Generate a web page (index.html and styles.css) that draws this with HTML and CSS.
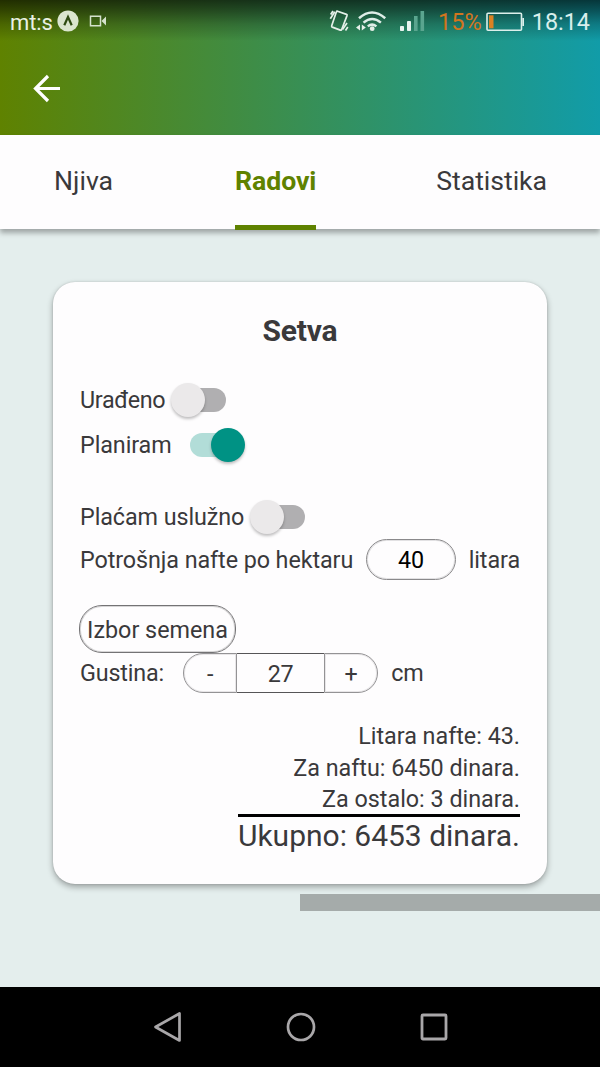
FILE: index.html
```html
<!DOCTYPE html>
<html lang="sr-Latn">
<head>
<meta charset="utf-8">
<title>Radovi</title>
<link rel="stylesheet" href="styles.css">
</head>
<body>
<div class="app">
  <header class="header">
    <div class="status">
      <span class="carrier">mt:s</span>
      <svg class="status-left" width="44" height="24" viewBox="0 0 44 24">
        <circle cx="11" cy="12" r="10.6" fill="#dbe5cf"/>
        <path d="M7.3 16.3 11 8l3.700 8.300" fill="none" stroke="#2f4b12" stroke-width="2.200"/>
        <path d="M33.500 7.200h10v9.600h-10z" fill="none" stroke="#d5e2cd" stroke-width="1.500"/>
        <path d="M44.500 12 49 7.500v9z" fill="#d5e2cd"/>
      </svg>
      <svg class="status-icons" width="100" height="30" viewBox="328 7 100 30">
        <g fill="none" stroke="#e5f0e9" stroke-width="1.700">
          <path d="m338.500 11.200 9 3.200q.8.300.5 1.200l-5.300 13.900q-.4 1-1.400.6l-8-3q-.9-.400-.600-1.300l4.600-13.800q.3-1 1.200-.8z"/>
          <path d="m331.700 14.500 2.300-3.500M331.300 18.800l4.500-7M343.500 29.500l4.500-6.500M346.500 30.500l2.300-3.500"/>
        </g>
        <g fill="none" stroke="#dfeee8" stroke-width="2.500">
          <path d="M360 18.200q13-11.500 26.200 0M364.500 22.600q8.700-7.200 17.400 0M368.800 26.400q4.300-3.500 8.600 0"/>
        </g>
        <circle cx="373.200" cy="28.700" r="2.400" fill="#e5f0e9"/>
        <path d="m361 24.500v6l-4-3zM362.800 24.500v6l4-3z" fill="#e5f0e9"/>
        <rect x="401" y="26" width="4" height="5" rx=".8" fill="#e7f3ef"/>
        <rect x="408" y="21" width="4" height="10" rx=".8" fill="#e7f3ef"/>
        <rect x="415" y="16" width="3.600" height="15" fill="#5aa58f"/>
        <rect x="421.500" y="11" width="3.600" height="20" fill="#5aa58f"/>
      </svg>
      <span class="percent">15%</span>
      <svg class="battery" width="39" height="20" viewBox="0 0 39 20">
        <rect x="1" y="1.300" width="34.500" height="17" rx="1" fill="none" stroke="#dcefeb" stroke-width="1.600"/>
        <path d="M36.300 6h1.700v8h-1.700z" fill="#dcefeb"/>
        <rect x="3" y="3.300" width="4.500" height="13" fill="#db8122"/>
      </svg>
      <span class="clock">18:14</span>
    </div>
    <svg class="back" width="30" height="30" viewBox="0 0 30 30">
      <path d="M28 15.500H4M16 3 3.500 15.500 16 28" fill="none" stroke="#fff" stroke-width="3.200"/>
    </svg>
  </header>

  <nav class="tabs">
    <a class="tab">Njiva</a>
    <a class="tab tab-active">Radovi</a>
    <a class="tab">Statistika</a>
  </nav>

  <main class="content">
    <section class="card">
      <h1 class="title">Setva</h1>
      <div class="row">Urađeno<span class="switch"></span></div>
      <div class="row">Planiram<span class="switch switch-on"></span></div>
      <div class="row row-service">Plaćam uslužno<span class="switch"></span></div>
      <div class="row row-field">Potrošnja nafte po hektaru<span class="field">40</span>litara</div>
      <div class="seed">Izbor semena</div>
      <div class="row row-field row-density">Gustina:
        <div class="stepper">
          <span class="step step-minus">-</span>
          <span class="step-value">27</span>
          <span class="step step-plus">+</span>
        </div>cm
      </div>
      <div class="summary">
        <div>Litara nafte: 43.</div>
        <div>Za naftu: 6450 dinara.</div>
        <div>Za ostalo: 3 dinara.</div>
        <div class="total">Ukupno: 6453 dinara.</div>
      </div>
    </section>
    <div class="scrollbar"></div>
  </main>

  <footer class="navbar">
    <svg width="30" height="34" viewBox="0 0 30 34"><path d="M26.500 3.500v27L2.500 17z" fill="none" stroke="#a9a7a9" stroke-width="2.700" stroke-linejoin="round"/></svg>
    <svg width="30" height="34" viewBox="0 0 30 34"><circle cx="15" cy="17" r="13" fill="none" stroke="#a9a7a9" stroke-width="2.700"/></svg>
    <svg width="30" height="34" viewBox="0 0 30 34"><rect x="3" y="5" width="24" height="24" rx="1" fill="none" stroke="#a9a7a9" stroke-width="2.800"/></svg>
  </footer>
</div>
</body>
</html>
```
FILE: styles.css
```css
* { box-sizing: border-box; }
body { margin: 0; }
.app {
  display: flex;
  flex-direction: column;
  width: 600px;
  height: 1067px;
  overflow: hidden;
  background: #e4eeed;
  color: #3a393b;
  font-family: Roboto, sans-serif;
  font-size: 23.33px;
  line-height: 31.67px;
}
.header {
  flex: none;
  height: 135px;
  background:
    linear-gradient(180deg, rgba(0,0,0,.65), rgba(0,0,0,.5) 9px, rgba(0,0,0,.22) 24px, rgba(0,0,0,0) 41px),
    linear-gradient(90deg, #5f8200, #119ca8);
}
.status {
  display: flex;
  align-items: center;
  height: 44px;
  padding: 1px 10px 0 10px;
  color: #e9f1e5;
  font-size: 22px;
}
.status-left { margin: -3px 0 0 4px; overflow: visible; }
.carrier { letter-spacing: -.1px; }
.status-icons { margin: -1px 0 0 auto; }
.percent { margin-left: 11px; color: #d2751f; font-size: 23.6px; }
.battery { margin: -2px 7px 0 4px; }
.clock { color: #d9efec; font-size: 23.4px; }
.back { display: block; margin: 29px 0 0 32px; }
.tabs {
  position: relative;
  flex: none;
  display: flex;
  justify-content: space-between;
  height: 94px;
  padding: 0 53px 0 54px;
  background: #fefdfe;
  box-shadow: 0 4px 5px rgba(0,0,0,.3);
  font-size: 26.67px;
}
.tab { height: 95px; padding-top: 31px; }
.tab:first-child { padding-right: 2px; }
.tab:last-child { letter-spacing: -.05px; }
.tab-active { border-bottom: 5px solid #5f8200; color: #5f8200; font-weight: 700; letter-spacing: -.1px; }
.content { flex: 1; padding-top: 53px; }
.card {
  width: 494px;
  height: 602px;
  margin: 0 auto;
  padding: 29px 27px 0;
  border-radius: 22px;
  background: #fefdfe;
  box-shadow: 0 3px 6px rgba(0,0,0,.32), 0 0 2px rgba(0,0,0,.15);
}
.title { margin: 0 0 27px; font-size: 30px; line-height: 40px; text-align: center; letter-spacing: -.2px; }
.row { display: flex; align-items: center; height: 45px; letter-spacing: -.08px; white-space: nowrap; }
.row:nth-child(2) { letter-spacing: -.35px; }
.row-service { margin-top: 27px; }
.row-field { height: 42px; }
.switch {
  display: flex;
  align-items: center;
  width: 55px;
  height: 24px;
  margin: -2px 0 0 6px;
  border-radius: 12px;
  background: linear-gradient(90deg, transparent 16px, #b0afb1 16px);
}
.switch::before {
  content: "";
  width: 34px;
  height: 34px;
  border-radius: 50%;
  background: #ebe9ea;
  box-shadow: 0 2px 3px rgba(0,0,0,.25);
}
.switch-on {
  justify-content: flex-end;
  margin-left: 18px;
  background: linear-gradient(90deg, #b2ddd8 38px, transparent 38px);
}
.switch-on::before { background: #009284; }
.field {
  width: 90px;
  height: 41px;
  margin: -3px 13px 0;
  border: 1px solid #8a898b;
  border-radius: 21px;
  box-shadow: inset 0 0 0 1px rgba(70,68,72,.15);
  color: #000;
  line-height: 41px;
  text-align: center;
}
.seed {
  width: 157px;
  height: 48px;
  margin: 23px 0 0 -1px;
  border: 1px solid #747375;
  border-radius: 23px;
  box-shadow: inset 0 0 0 1px rgba(60,58,62,.2);
  line-height: 49px;
  text-align: center;
}
.row-density { height: 40px; padding-top: 2px; letter-spacing: -.15px; }
.stepper { display: flex; width: 195px; height: 40px; margin: -2px 13px 0 19px; line-height: 41px; text-align: center; }
.step { width: 54px; border: 1px solid #949395; box-shadow: inset 0 0 0 1px rgba(70,68,72,.12); }
.step-minus { border-radius: 21px 0 0 21px; }
.step-plus { border-radius: 0 21px 21px 0; }
.step-value { flex: 1; border: solid #565557; border-width: 1px 0; }
.summary { display: flex; flex-direction: column; align-items: flex-end; margin-top: 28px; letter-spacing: -.01px; }
.total { margin-top: -2px; border-top: 3.33px solid #000; font-size: 30px; line-height: 37.500px; }
.scrollbar { width: 300px; height: 17px; margin: 10px 0 0 300px; background: #a5abaa; }
.navbar {
  flex: none;
  display: flex;
  justify-content: center;
  align-items: center;
  gap: 103px;
  height: 80px;
  padding-left: 2px;
  background: #000;
}
```
